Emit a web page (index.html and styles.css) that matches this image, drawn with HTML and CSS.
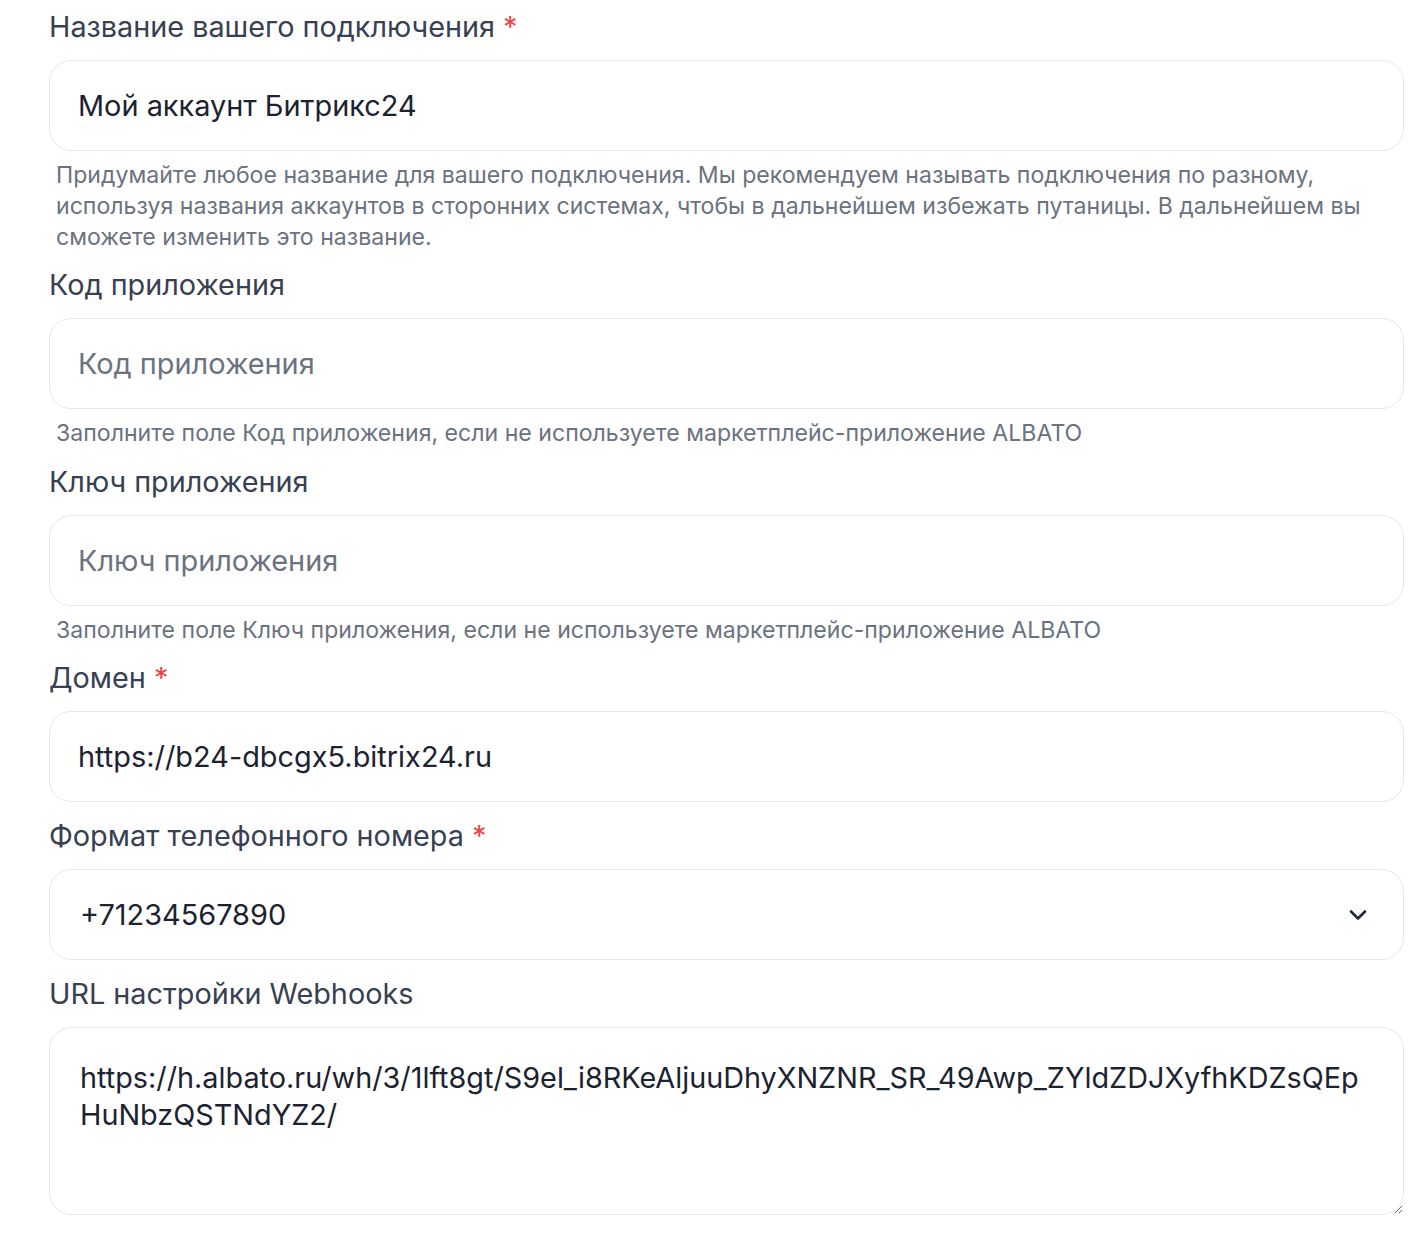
FILE: index.html
```html
<!DOCTYPE html>
<html lang="ru">
<head>
<meta charset="utf-8">
<title>Подключение Битрикс24</title>
<link rel="stylesheet" href="styles.css">
</head>
<body>
<form class="form">
  <div class="field">
    <label class="label">Название вашего подключения <span class="req">*</span></label>
    <div class="input">Мой аккаунт Битрикс24</div>
    <p class="help">Придумайте любое название для вашего подключения. Мы рекомендуем называть подключения по разному, используя названия аккаунтов в сторонних системах, чтобы в дальнейшем избежать путаницы. В дальнейшем вы сможете изменить это название.</p>
  </div>
  <div class="field">
    <label class="label">Код приложения</label>
    <div class="input placeholder">Код приложения</div>
    <p class="help">Заполните поле Код приложения, если не используете маркетплейс-приложение ALBATO</p>
  </div>
  <div class="field">
    <label class="label">Ключ приложения</label>
    <div class="input placeholder">Ключ приложения</div>
    <p class="help">Заполните поле Ключ приложения, если не используете маркетплейс-приложение ALBATO</p>
  </div>
  <div class="field">
    <label class="label">Домен <span class="req">*</span></label>
    <div class="input">https://b24-dbcgx5.bitrix24.ru</div>
  </div>
  <div class="field">
    <label class="label">Формат телефонного номера <span class="req">*</span></label>
    <div class="input select"><span>+71234567890</span>
      <svg class="chev" width="18" height="12" viewBox="0 0 18 12"><path d="M2 2.5 L9 9.5 L16 2.5" fill="none" stroke="#1f2937" stroke-width="2.6" stroke-linecap="round" stroke-linejoin="round"/></svg>
    </div>
  </div>
  <div class="field">
    <label class="label">URL настройки Webhooks</label>
    <textarea class="input area" spellcheck="false">https://h.albato.ru/wh/3/1lft8gt/S9el_i8RKeAljuuDhyXNZNR_SR_49Awp_ZYldZDJXyfhKDZsQEpHuNbzQSTNdYZ2/</textarea>
  </div>
</form>
</body>
</html>
```

FILE: styles.css
```css
html, body {
  margin: 0;
  padding: 0;
  background: #ffffff;
}

body {
  font-family: Inter, "Noto Sans", sans-serif;
  color: #1f2937;
}

.form {
  display: flex;
  flex-direction: column;
  gap: 16px;
  padding: 8.5px 16px 0 49px;
}

.field {
  display: flex;
  flex-direction: column;
}

.label {
  font-size: 28.8px;
  line-height: 35px;
  color: #374151;
  margin-bottom: 16px;
}

.req {
  color: #ef4444;
}

.input {
  box-sizing: border-box;
  height: 91px;
  border: 1px solid #e5e7eb;
  border-radius: 22px;
  background: #fff;
  padding: 0 28px;
  display: flex;
  align-items: center;
  font-size: 28.9px;
  color: #1c2330;
}

.placeholder {
  color: #6b7280;
}

.select {
  justify-content: space-between;
  padding-left: 30px;
  padding-right: 36px;
}

.chev {
  display: block;
}

.area {
  display: block;
  width: 100%;
  height: 188px;
  font-family: Inter, "Noto Sans", sans-serif;
  font-size: 28.8px;
  line-height: 37px;
  padding: 31px 30px;
  resize: vertical;
  outline: none;
  word-break: break-all;
}

.help {
  margin: 9px 0 -1.5px;
  padding-left: 7px;
  font-size: 23.1px;
  line-height: 31px;
  color: #6b7280;
}
```
